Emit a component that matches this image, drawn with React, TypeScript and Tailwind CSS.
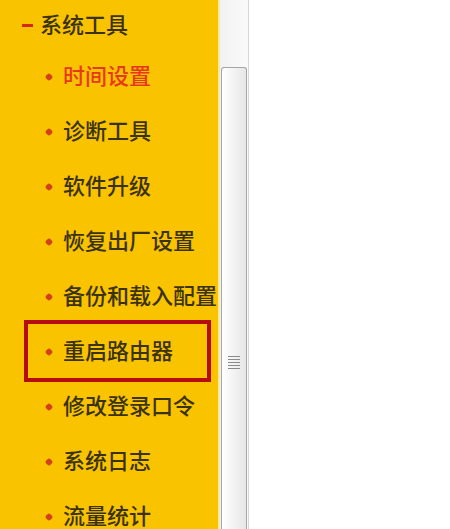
import React from "react";

const items = [
  "时间设置",
  "诊断工具",
  "软件升级",
  "恢复出厂设置",
  "备份和载入配置",
  "重启路由器",
  "修改登录口令",
  "系统日志",
  "流量统计",
];

const font = { fontFamily: '"Noto Sans CJK SC", "Noto Sans", sans-serif' };

export default function App() {
  return (
    <div className="flex w-[450px] h-[529px] overflow-hidden bg-white" style={font}>
      <div className="w-[218px] shrink-0 bg-[#f9c300] pt-px">
        <div className="h-[48px] flex items-center">
          <span className="ml-[22px] w-[11px] h-[3px] bg-[#d8281a]" />
          <span className="ml-[7px] mb-[5px] text-[22px] leading-none font-medium text-[#3b3210]">系统工具</span>
        </div>
        {items.map((label, i) => (
          <div key={label} className="relative h-[55px] flex items-center">
            <span className="ml-[46px] w-[6px] h-[6px] rotate-45 rounded-[2px] bg-[#d4401c]" />
            <span
              className={
                "ml-[11px] mb-[5px] text-[22px] leading-none font-medium whitespace-nowrap " +
                (i === 0 ? "text-[#e8381a]" : "text-[#3b3210]")
              }
            >
              {label}
            </span>
            {i === 5 && (
              <span className="absolute left-[24px] top-[-4px] w-[187px] h-[62px] border-[4px] border-[#b50d0d]" />
            )}
          </div>
        ))}
      </div>
      <div className="w-[2px] shrink-0 bg-[#fbe9a0]" />
      <div className="w-[29px] shrink-0 flex flex-col bg-gradient-to-r from-[#f2f2f2] to-[#fafafa] border-r border-[#d8d8d8]">
        <div className="h-[67px] shrink-0" />
        <div className="flex-1 mx-[1px] rounded-t-[3px] border border-b-0 border-[#a6a6a6] bg-gradient-to-r from-[#ffffff] to-[#e6e6e6] flex flex-col">
          <div className="h-[288px] shrink-0" />
          <div className="self-center flex flex-col gap-[2px]">
            {[0, 1, 2, 3, 4].map((k) => (
              <span key={k} className="w-[12px] h-px bg-[#8a8a8a]" />
            ))}
          </div>
        </div>
      </div>
      <div className="flex-1 bg-white" />
    </div>
  );
}
